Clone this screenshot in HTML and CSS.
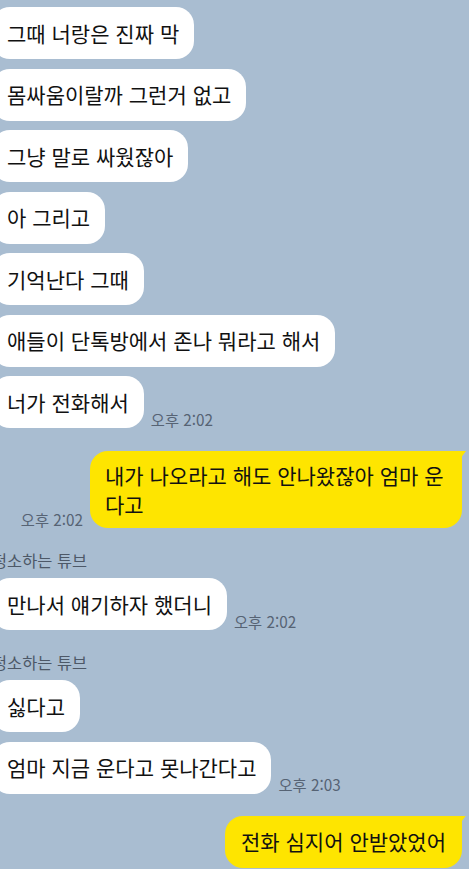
FILE: index.html
```html
<!DOCTYPE html>
<html lang="ko">
<head>
<meta charset="utf-8">
<title>채팅</title>
<link rel="stylesheet" href="styles.css">
</head>
<body>
<div class="chat">
  <div class="row in"><div class="bubble">그때 너랑은 진짜 막</div></div>
  <div class="row in"><div class="bubble">몸싸움이랄까 그런거 없고</div></div>
  <div class="row in"><div class="bubble">그냥 말로 싸웠잖아</div></div>
  <div class="row in"><div class="bubble">아 그리고</div></div>
  <div class="row in"><div class="bubble">기억난다 그때</div></div>
  <div class="row in"><div class="bubble">애들이 단톡방에서 존나 뭐라고 해서</div></div>
  <div class="row in"><div class="bubble">너가 전화해서</div><span class="time">오후 2:02</span></div>
  <div class="row out"><span class="time">오후 2:02</span><div class="bubble mine wide">내가 나오라고 해도 안나왔잖아 엄마 운다고</div></div>
  <div class="name">청소하는 튜브</div>
  <div class="row in"><div class="bubble">만나서 얘기하자 했더니</div><span class="time">오후 2:02</span></div>
  <div class="name">청소하는 튜브</div>
  <div class="row in"><div class="bubble">싫다고</div></div>
  <div class="row in"><div class="bubble">엄마 지금 운다고 못나간다고</div><span class="time">오후 2:03</span></div>
  <div class="row out"><div class="bubble mine">전화 심지어 안받았었어</div></div>
</div>
</body>
</html>
```

FILE: styles.css
```css
html, body {
  margin: 0;
  padding: 0;
}

body {
  width: 469px;
  height: 869px;
  overflow: hidden;
  background: #a9bdd1;
  font-family: "Noto Sans CJK KR", "Noto Sans", sans-serif;
  color: #111111;
}

.chat {
  display: flex;
  flex-direction: column;
  padding-top: 7px;
  margin-left: -8px;
  margin-right: 7px;
}

.row {
  display: flex;
  align-items: flex-end;
  gap: 7px;
}

.row + .row {
  margin-top: 9.5px;
}

.row.out {
  justify-content: flex-end;
  margin-top: 23px;
}

.row.out:last-child {
  margin-top: 22px;
}

.bubble {
  box-sizing: border-box;
  display: flex;
  align-items: center;
  min-height: 52px;
  padding: 9.5px 15px;
  background: #ffffff;
  border-radius: 18px;
  font-size: 21px;
  line-height: 29px;
  position: relative;
}

.bubble.mine {
  background: #fee500;
  border-top-right-radius: 3px;
  padding: 9.5px 16px 9.5px 16px;
}

.bubble.mine::after {
  content: "";
  position: absolute;
  top: 0;
  right: -4px;
  width: 9px;
  height: 12px;
  background: #fee500;
  clip-path: polygon(0 0, 100% 0, 0 100%);
}

.bubble.wide {
  max-width: 372px;
  padding-left: 15px;
}

.time {
  font-size: 15.3px;
  line-height: 1;
  color: #566374;
  white-space: nowrap;
  margin-bottom: 1px;
}

.name {
  margin-top: 22px;
  font-size: 16.4px;
  line-height: 20px;
  color: #4d5867;
  white-space: nowrap;
}

.name + .row {
  margin-top: 8px;
}
```
